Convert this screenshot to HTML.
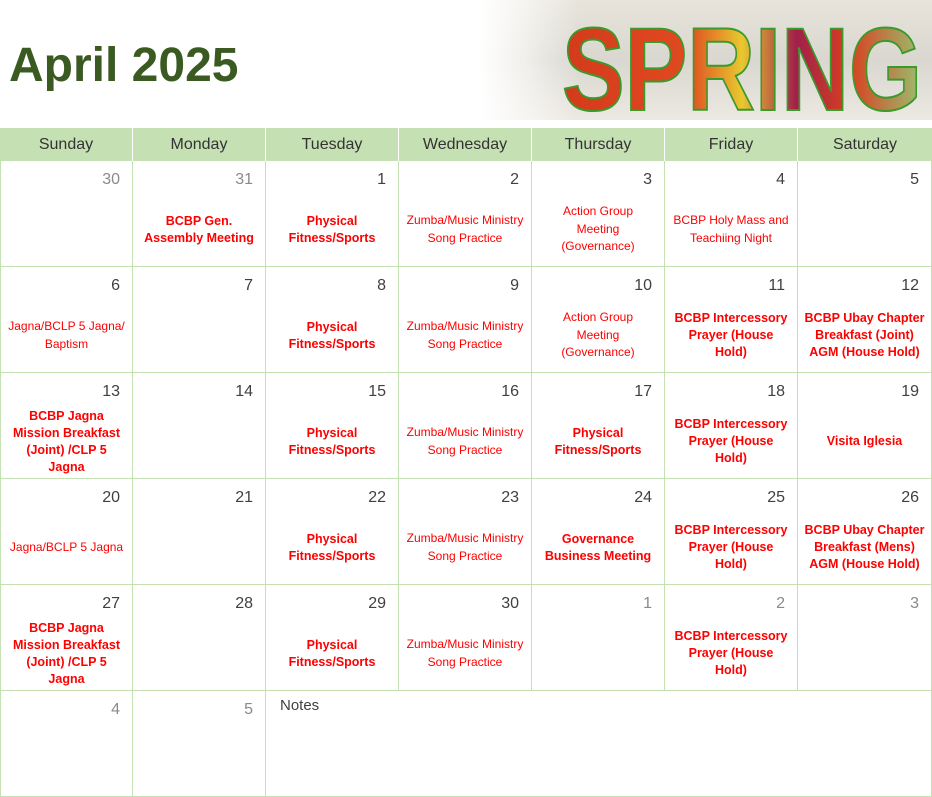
<!DOCTYPE html>
<html><head><meta charset="utf-8"><style>
*{margin:0;padding:0;box-sizing:border-box}
body{width:932px;height:797px;background:#fff;position:relative;overflow:hidden;font-family:"Liberation Sans",sans-serif}
h1{position:absolute;left:9px;top:38px;font-size:48px;font-weight:bold;color:#3a5a22;letter-spacing:0px}
.hdr{position:absolute;left:480px;top:0;width:452px;height:120px;background:linear-gradient(90deg,#fff 0%,rgba(255,255,255,0.6) 10%,rgba(255,255,255,0) 22%),linear-gradient(180deg,#e8e4dc,#d9d7cf 50%,#ece8e2);}
.dh{position:absolute;top:128px;height:33px;background:#c5e0b3;text-align:center;line-height:33px;font-size:16px;color:#333}
.c{position:absolute;border-right:1px solid #c5e0b3;border-bottom:1px solid #c5e0b3}
.n{position:absolute;right:12px;top:10px;font-size:16px;color:#404040}
.g{color:#8a8a8a}
.e{position:absolute;left:0;right:0;top:32px;bottom:0;display:flex;align-items:center;justify-content:center;text-align:center;color:#f00;font-size:12px;line-height:17.5px}
.b{font-weight:bold;font-size:12.5px;line-height:17px}
</style></head><body>
<h1>April 2025</h1>
<div class="hdr">
<svg width="452" height="120" viewBox="0 0 452 120">
<defs><linearGradient id="f" x1="0" x2="1"><stop offset="0" stop-color="#d23a1c"/><stop offset="0.35" stop-color="#e04a20"/><stop offset="0.5" stop-color="#e8c830"/><stop offset="0.65" stop-color="#a0204a"/><stop offset="0.8" stop-color="#d84020"/><stop offset="1" stop-color="#9ac070"/></linearGradient></defs>
<text x="82" y="110" font-family="Liberation Sans" font-weight="bold" font-size="118" fill="url(#f)" stroke="#3a9a2a" stroke-width="2" textLength="360" lengthAdjust="spacingAndGlyphs">SPRING</text>
</svg></div>
<div class="dh" style="left:0;width:133px;border-right:1px solid #fff">Sunday</div>
<div class="dh" style="left:133px;width:133px;border-right:1px solid #fff">Monday</div>
<div class="dh" style="left:266px;width:133px;border-right:1px solid #fff">Tuesday</div>
<div class="dh" style="left:399px;width:133px;border-right:1px solid #fff">Wednesday</div>
<div class="dh" style="left:532px;width:133px;border-right:1px solid #fff">Thursday</div>
<div class="dh" style="left:665px;width:133px;border-right:1px solid #fff">Friday</div>
<div class="dh" style="left:798px;width:134px">Saturday</div>
<div id="g"></div>
<script>
var Z='Zumba/Music Ministry<br>Song Practice',P='*Physical<br>Fitness/Sports',A='Action Group<br>Meeting<br>(Governance)',I='*BCBP Intercessory<br>Prayer (House<br>Hold)';
var d=[
[['30g',''],['31g','*BCBP Gen.<br>Assembly Meeting'],['1',P],['2',Z],['3',A],['4','BCBP Holy Mass and<br>Teachiing Night'],['5','']],
[['6','Jagna/BCLP 5 Jagna/<br>Baptism'],['7',''],['8',P],['9',Z],['10',A],['11',I],['12','*BCBP Ubay Chapter<br>Breakfast (Joint)<br>AGM (House Hold)']],
[['13','*BCBP Jagna<br>Mission Breakfast<br>(Joint) /CLP 5<br>Jagna'],['14',''],['15',P],['16',Z],['17',P],['18',I],['19','*Visita Iglesia']],
[['20','Jagna/BCLP 5 Jagna'],['21',''],['22',P],['23',Z],['24','*Governance<br>Business Meeting'],['25',I],['26','*BCBP Ubay Chapter<br>Breakfast (Mens)<br>AGM (House Hold)']],
[['27','*BCBP Jagna<br>Mission Breakfast<br>(Joint) /CLP 5<br>Jagna'],['28',''],['29',P],['30',Z],['1g',''],['2g',I],['3g','']]
];
var h='';
for(var r=0;r<5;r++)for(var c=0;c<7;c++){var x=c*133,y=161+r*106,w=c==6?134:133,it=d[r][c],n=it[0],g=n.slice(-1)=='g';if(g)n=n.slice(0,-1);var t=it[1],b=t[0]=='*';if(b)t=t.slice(1);
h+='<div class="c" style="left:'+x+'px;top:'+y+'px;width:'+w+'px;height:106px'+(c==0?';border-left:1px solid #c5e0b3':'')+'"><div class="n'+(g?' g':'')+'">'+n+'</div>'+(t?'<div class="e'+(b?' b':'')+'"><div>'+t+'</div></div>':'')+'</div>';}
h+='<div class="c" style="left:0;top:691px;width:133px;height:106px;border-left:1px solid #c5e0b3"><div class="n g">4</div></div>';
h+='<div class="c" style="left:133px;top:691px;width:133px;height:106px"><div class="n g">5</div></div>';
h+='<div class="c" style="left:266px;top:691px;width:666px;height:106px"><div style="position:absolute;left:14px;top:6px;font-size:15px;color:#404040">Notes</div></div>';
document.getElementById('g').innerHTML=h;
</script>
</body></html>
